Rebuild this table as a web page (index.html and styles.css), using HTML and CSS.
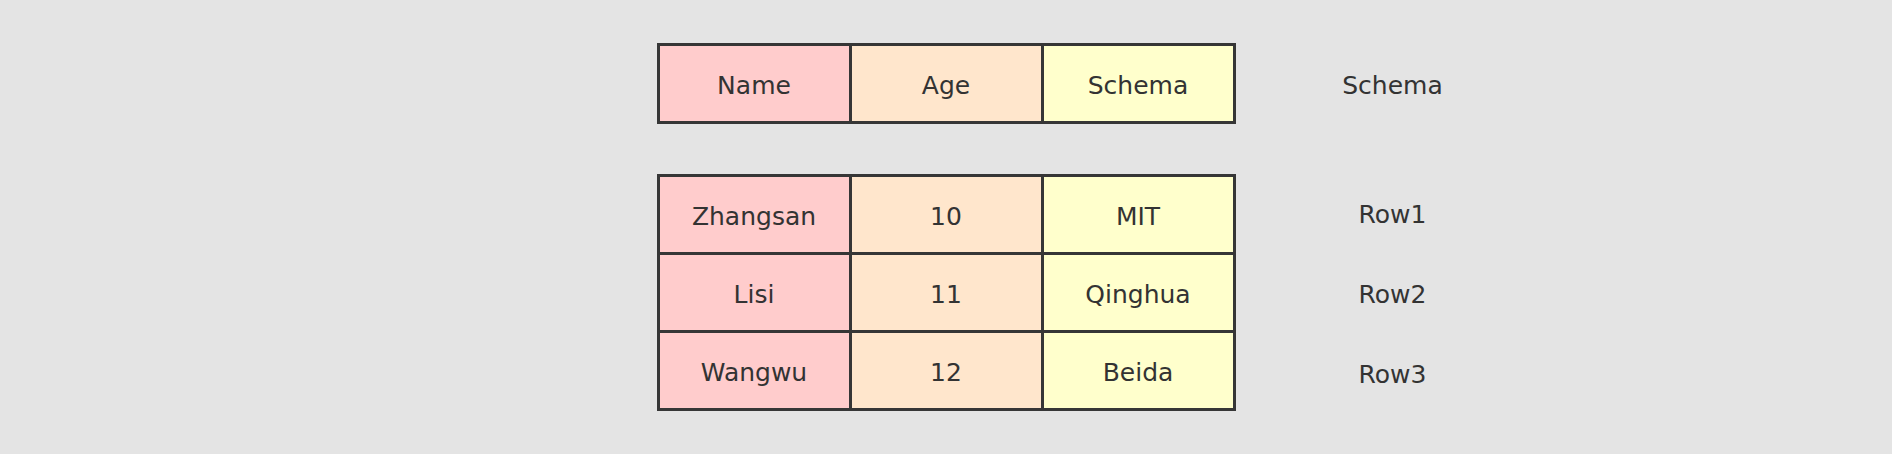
FILE: index.html
```html
<!DOCTYPE html>
<html>
<head>
<meta charset="utf-8">
<link rel="stylesheet" href="styles.css">
</head>
<body>
<div class="page">
  <div class="block">
    <div class="spacer"></div>
    <div class="grid">
      <div class="cell c1">Name</div>
      <div class="cell c2">Age</div>
      <div class="cell c3">Schema</div>
    </div>
    <div class="labels">
      <div class="label">Schema</div>
    </div>
  </div>
  <div class="block data">
    <div class="spacer"></div>
    <div class="grid">
      <div class="cell c1">Zhangsan</div>
      <div class="cell c2">10</div>
      <div class="cell c3">MIT</div>
      <div class="cell c1">Lisi</div>
      <div class="cell c2">11</div>
      <div class="cell c3">Qinghua</div>
      <div class="cell c1">Wangwu</div>
      <div class="cell c2">12</div>
      <div class="cell c3">Beida</div>
    </div>
    <div class="labels row-labels">
      <div class="label">Row1</div>
      <div class="label">Row2</div>
      <div class="label">Row3</div>
    </div>
  </div>
</div>
</body>
</html>
```
FILE: styles.css
```css
html, body {
  margin: 0;
  padding: 0;
  background: #e4e4e4;
}
body {
  width: 1892px;
  height: 454px;
  overflow: hidden;
  font-family: "DejaVu Sans", Verdana, sans-serif;
  color: #333333;
}
.page {
  padding-top: 43px;
  display: flex;
  flex-direction: column;
  gap: 50px;
}
.block {
  display: grid;
  grid-template-columns: 1fr 579px 1fr;
}
.grid {
  display: grid;
  grid-template-columns: repeat(3, 189px);
  grid-auto-rows: 75px;
  gap: 3px;
  padding: 3px;
  background: #363636;
}
.cell {
  display: flex;
  align-items: center;
  justify-content: center;
  font-size: 25px;
  padding-top: 4px;
  box-sizing: border-box;
}
.c1 { background: #ffcccc; }
.c2 { background: #ffe6cc; }
.c3 { background: #ffffcc; }
.labels {
  display: flex;
  flex-direction: column;
  gap: 3px;
  padding-top: 3px;
  padding-left: 57px;
}
.row-labels {
  gap: 5px;
  padding-top: 1px;
}
.label {
  width: 200px;
  height: 75px;
  display: flex;
  align-items: center;
  justify-content: center;
  font-size: 25px;
  padding-top: 4px;
  box-sizing: border-box;
}
```
